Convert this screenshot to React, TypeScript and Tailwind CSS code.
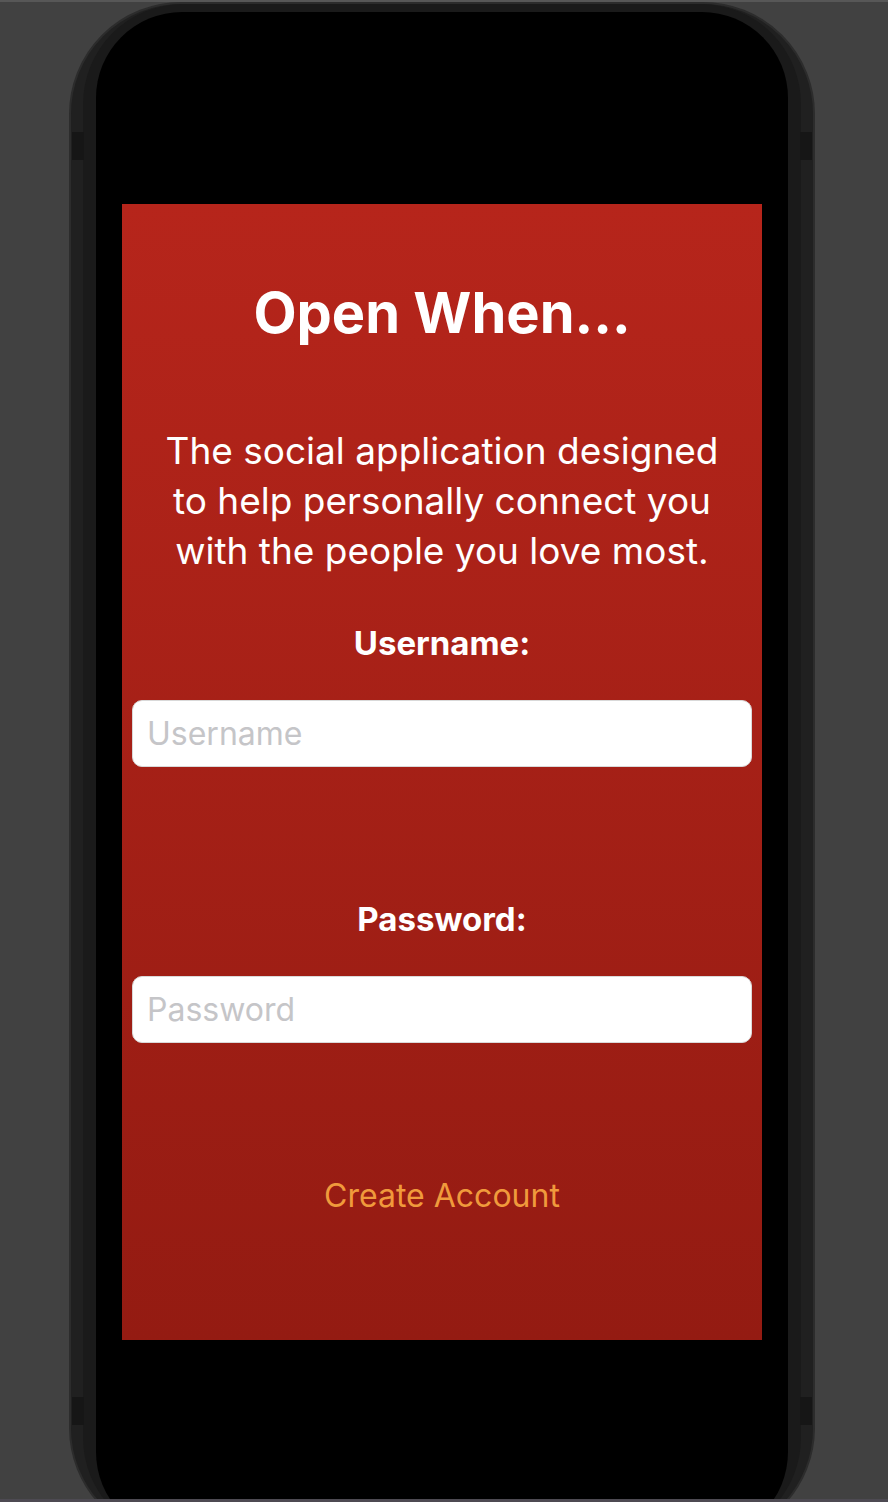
import { useState } from 'react'

function SideButton({ side, top }: { side: 'left' | 'right'; top: string }) {
  // little dark notches on the frame where the hardware buttons sit
  return (
    <div
      className={`absolute w-[12px] h-[28px] bg-[#161616] ${side === 'left' ? 'left-[1px]' : 'right-[1px]'} ${top}`}
    />
  )
}

export default function App() {
  const [username, setUsername] = useState('')
  const [password, setPassword] = useState('')

  return (
    <div className="relative h-[1502px] overflow-hidden bg-[#414141] border-t-2 border-[#575757] font-['Inter','Liberation_Sans',sans-serif]">
      {/* Phone frame */}
      <div className="relative ml-[69px] w-[746px] h-[1538px] rounded-[112px] border-2 border-[#2c2c2c] bg-[#202020] px-[12px]">
        <SideButton side="left" top="top-[128px]" />
        <SideButton side="left" top="top-[1393px]" />
        <SideButton side="right" top="top-[128px]" />
        <SideButton side="right" top="top-[1393px]" />

        <div className="h-full rounded-[100px] bg-[#1a1a1a] px-[13px] pt-[8px]">
          {/* Screen */}
          <div className="h-full rounded-[86px] bg-black px-[26px] pt-[192px]">
            <div className="flex h-[1136px] flex-col items-center bg-linear-to-b from-[#b6251b] to-[#941b12] px-[10px] text-white">
              <h1 className="mt-[81px] text-[56px] font-bold leading-none">Open When...</h1>

              <p className="mt-[85px] text-center text-[37px] leading-[50px] whitespace-nowrap">
                The social application designed
                <br />
                to help personally connect you
                <br />
                with the people you love most.
              </p>

              <label className="mt-[49px] text-[33px] font-bold leading-[36px]">Username:</label>
              <input
                value={username}
                onChange={e => setUsername(e.target.value)}
                placeholder="Username"
                className="mt-[39px] h-[67px] w-full rounded-[10px] border border-[#d9d9d9] bg-white px-[14px] text-[32px] text-black outline-none placeholder:text-[#c5c5c8]"
              />

              <label className="mt-[134px] text-[33px] font-bold leading-[36px]">Password:</label>
              <input
                type="password"
                value={password}
                onChange={e => setPassword(e.target.value)}
                placeholder="Password"
                className="mt-[39px] h-[67px] w-full rounded-[10px] border border-[#d9d9d9] bg-white px-[14px] text-[32px] text-black outline-none placeholder:text-[#c5c5c8]"
              />

              <button className="mt-[133px] text-[32px] leading-[40px] text-[#f09a3c]">Create Account</button>
            </div>
          </div>
        </div>
      </div>

      {/* bottom edge strip of the capture */}
      <div className="absolute bottom-0 left-0 h-[3px] w-full bg-[#4d4a52]" />
    </div>
  )
}
